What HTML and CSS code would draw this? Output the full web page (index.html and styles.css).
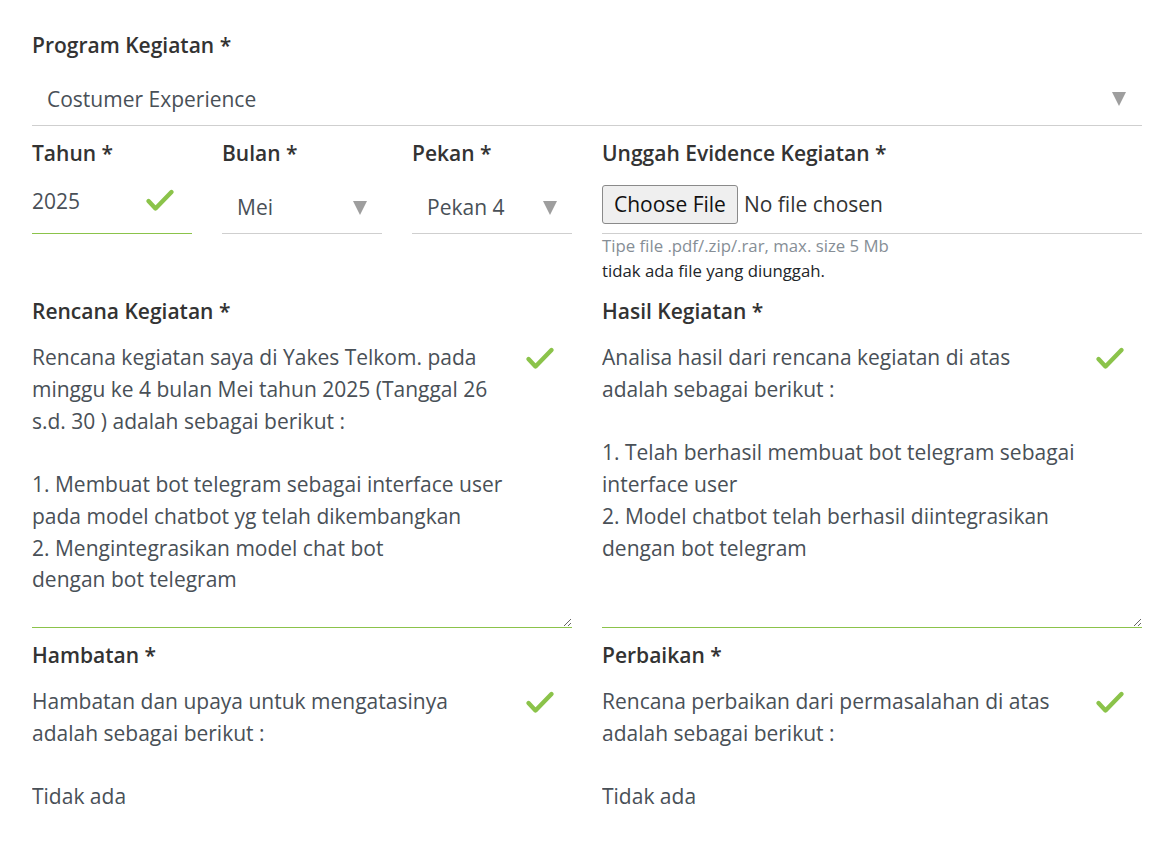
FILE: index.html
```html
<!DOCTYPE html>
<html lang="id">
<head>
<meta charset="utf-8">
<title>Form Kegiatan</title>
<link rel="stylesheet" href="styles.css">
</head>
<body>
<form class="form">
  <div class="group g-top">
    <label class="label">Program Kegiatan *</label>
    <div class="select-wrap">
      <select class="select select-main">
        <option>Costumer Experience</option>
      </select>
      <span class="arrow"></span>
    </div>
  </div>

  <div class="row4 group g-mid">
    <div class="col">
      <label class="label">Tahun *</label>
      <div class="field-wrap">
        <input class="input valid" type="text" value="2025">
        <svg class="check check-input" viewBox="0 0 32 26" width="32" height="26"><polyline points="4.5,13 11.5,20.5 27.5,4" fill="none" stroke="#8bc34a" stroke-width="4.4" stroke-linecap="round" stroke-linejoin="round"/></svg>
      </div>
    </div>
    <div class="col">
      <label class="label">Bulan *</label>
      <div class="select-wrap">
        <select class="select select-sm"><option>Mei</option></select>
        <span class="arrow arrow-sm"></span>
      </div>
    </div>
    <div class="col">
      <label class="label">Pekan *</label>
      <div class="select-wrap">
        <select class="select select-sm"><option>Pekan 4</option></select>
        <span class="arrow arrow-sm"></span>
      </div>
    </div>
    <div class="col">
      <label class="label">Unggah Evidence Kegiatan *</label>
      <div class="file-wrap">
        <input class="file" type="file">
      </div>
      <div class="help">Tipe file .pdf/.zip/.rar, max. size 5 Mb</div>
      <div class="note">tidak ada file yang diunggah.</div>
    </div>
  </div>

  <div class="row2 group g-area">
    <div class="col">
      <label class="label">Rencana Kegiatan *</label>
      <div class="field-wrap">
        <textarea class="area valid">Rencana kegiatan saya di Yakes Telkom. pada
minggu ke 4 bulan Mei tahun 2025 (Tanggal 26
s.d. 30 ) adalah sebagai berikut :

1. Membuat bot telegram sebagai interface user
pada model chatbot yg telah dikembangkan
2. Mengintegrasikan model chat bot
dengan bot telegram</textarea>
        <svg class="check check-area" viewBox="0 0 32 26" width="32" height="26"><polyline points="4.5,13 11.5,20.5 27.5,4" fill="none" stroke="#8bc34a" stroke-width="4.4" stroke-linecap="round" stroke-linejoin="round"/></svg>
      </div>
    </div>
    <div class="col">
      <label class="label">Hasil Kegiatan *</label>
      <div class="field-wrap">
        <textarea class="area valid">Analisa hasil dari rencana kegiatan di atas
adalah sebagai berikut :

1. Telah berhasil membuat bot telegram sebagai
interface user
2. Model chatbot telah berhasil diintegrasikan
dengan bot telegram</textarea>
        <svg class="check check-area" viewBox="0 0 32 26" width="32" height="26"><polyline points="4.5,13 11.5,20.5 27.5,4" fill="none" stroke="#8bc34a" stroke-width="4.4" stroke-linecap="round" stroke-linejoin="round"/></svg>
      </div>
    </div>
  </div>

  <div class="row2 group">
    <div class="col">
      <label class="label">Hambatan *</label>
      <div class="field-wrap">
        <textarea class="area valid">Hambatan dan upaya untuk mengatasinya
adalah sebagai berikut :

Tidak ada</textarea>
        <svg class="check check-area" viewBox="0 0 32 26" width="32" height="26"><polyline points="4.5,13 11.5,20.5 27.5,4" fill="none" stroke="#8bc34a" stroke-width="4.4" stroke-linecap="round" stroke-linejoin="round"/></svg>
      </div>
    </div>
    <div class="col">
      <label class="label">Perbaikan *</label>
      <div class="field-wrap">
        <textarea class="area valid">Rencana perbaikan dari permasalahan di atas
adalah sebagai berikut :

Tidak ada</textarea>
        <svg class="check check-area" viewBox="0 0 32 26" width="32" height="26"><polyline points="4.5,13 11.5,20.5 27.5,4" fill="none" stroke="#8bc34a" stroke-width="4.4" stroke-linecap="round" stroke-linejoin="round"/></svg>
      </div>
    </div>
  </div>
</form>
</body>
</html>
```

FILE: styles.css
```css
* { box-sizing: border-box; }

html, body {
  margin: 0;
  background: #ffffff;
}

body {
  font-family: "Open Sans", "Liberation Sans", sans-serif;
  color: #495057;
}

.form {
  width: 1110px;
  margin-left: 32px;
  padding-top: 30px;
}

.group { margin-bottom: 12px; }
.g-top { margin-bottom: 12px; }
.g-mid { margin-bottom: 13px; }
.g-area { margin-bottom: 12px; }

.label {
  display: block;
  font-family: "Open Sans", sans-serif;
  font-weight: 600;
  font-size: 21px;
  line-height: 30px;
  color: #333333;
  margin-bottom: 8px;
}

.row4 {
  display: grid;
  grid-template-columns: 160px 160px 160px 540px;
  column-gap: 30px;
}

.row2 {
  display: grid;
  grid-template-columns: 540px 540px;
  column-gap: 30px;
}

.select-wrap,
.field-wrap {
  position: relative;
}

.select {
  appearance: none;
  -webkit-appearance: none;
  display: block;
  width: 100%;
  height: 58px;
  border: 0;
  border-bottom: 1px solid #cfcfcf;
  border-radius: 0;
  background: transparent;
  font-family: "Open Sans", sans-serif;
  font-size: 21px;
  color: #495057;
  outline: none;
  padding: 5px 40px 0 15px;
}

.select-sm { padding-top: 5px; }

.arrow {
  position: absolute;
  right: 16px;
  top: 24px;
  width: 0;
  height: 0;
  border-left: 7px solid transparent;
  border-right: 7px solid transparent;
  border-top: 14px solid #9e9e9e;
  pointer-events: none;
}

.arrow-sm {
  right: 15px;
  top: 25px;
}

.input {
  display: block;
  width: 100%;
  height: 58px;
  border: 0;
  border-bottom: 1px solid #cfcfcf;
  background: transparent;
  font-family: "Open Sans", sans-serif;
  font-size: 21px;
  color: #495057;
  padding: 0 40px 8px 0;
  outline: none;
}

.input.valid { border-bottom-color: #8bc34a; }

.check {
  position: absolute;
  pointer-events: none;
}

.check-input {
  right: 16px;
  top: 12px;
}

.check-area {
  right: 16px;
  top: 12px;
}

.file-wrap {
  height: 58px;
  border-bottom: 1px solid #cfcfcf;
  display: flex;
  align-items: flex-start;
  padding-top: 9px;
}

.file {
  font-family: "Open Sans", sans-serif;
  font-size: 21px;
  color: #333333;
  width: 100%;
}

.file::file-selector-button {
  font-family: "Open Sans", sans-serif;
  font-size: 21px;
  line-height: 29px;
  padding: 4px 11px;
  margin-right: 6px;
  border: 1px solid #8a8a8a;
  border-radius: 3px;
  background: #efefef;
  color: #111111;
}

.help {
  font-size: 16.8px;
  line-height: 24px;
  color: #868e96;
}

.note {
  font-size: 16.8px;
  line-height: 25px;
  color: #212529;
}

.area {
  display: block;
  width: 100%;
  height: 294px;
  border: 0;
  border-bottom: 1px solid #cfcfcf;
  border-radius: 0;
  background: transparent;
  font-family: "Open Sans", sans-serif;
  font-size: 21px;
  line-height: 31.75px;
  color: #495057;
  padding: 8px 50px 20px 0;
  outline: none;
  overflow: hidden;
}

.area.valid { border-bottom-color: #8bc34a; }
```
